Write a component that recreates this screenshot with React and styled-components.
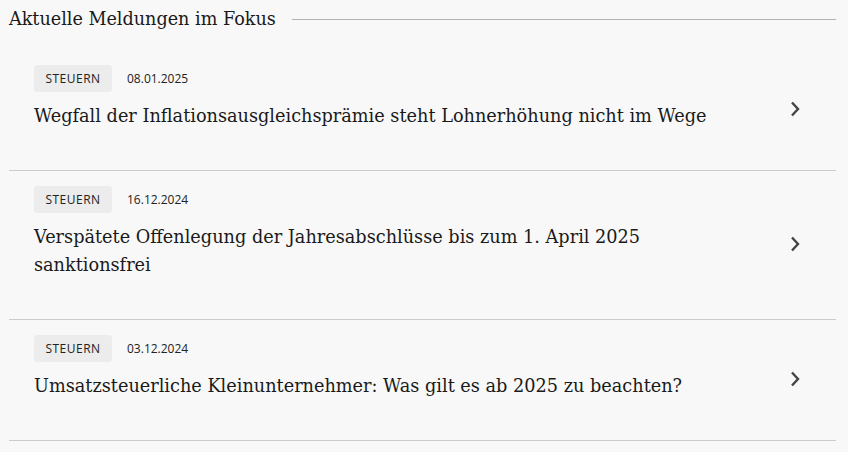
import React from "react";
import styled, { createGlobalStyle } from "styled-components";

const Global = createGlobalStyle`
  html, body { margin: 0; padding: 0; background: #f8f8f8; }
  body { font-family: "DejaVu Serif", serif; color: #1a1a1a; }
`;

const Section = styled.section`
  padding: 6px 12px 0 9px;
`;

const Header = styled.div`
  display: flex;
  align-items: center;
  gap: 16px;
  height: 26px;
`;

const Heading = styled.h2`
  margin: 0;
  font-family: "DejaVu Serif", serif;
  font-weight: 400;
  font-size: 17.6px;
  line-height: 26px;
  color: #1a1a1a;
  white-space: nowrap;
`;

const Rule = styled.div`
  flex: 1;
  height: 1px;
  background: #b3b3b3;
`;

const List = styled.ul`
  list-style: none;
  margin: 18px 0 0;
  padding: 0;
`;

const Item = styled.li`
  display: flex;
  align-items: center;
  padding: 15px 36px 40px 25px;
  border-bottom: 1px solid #cccccc;
`;

const Body = styled.div`
  flex: 1;
`;

const Meta = styled.div`
  display: flex;
  align-items: center;
  gap: 15px;
`;

const Tag = styled.span`
  display: inline-flex;
  align-items: center;
  justify-content: center;
  width: 78px;
  height: 27px;
  background: #ececec;
  border-radius: 3px;
  font-family: "Open Sans", sans-serif;
  font-size: 12px;
  letter-spacing: 0.5px;
  color: #222;
`;

const DateText = styled.span`
  font-family: "Open Sans", sans-serif;
  font-size: 12px;
  color: #222;
`;

const Title = styled.div`
  margin-top: 10px;
  font-family: "DejaVu Serif", serif;
  font-size: 17.7px;
  line-height: 28px;
  color: #1a1a1a;
  max-width: 690px;
`;

const Chevron = styled.svg`
  width: 10px;
  height: 16px;
  flex: none;
  margin-top: 23px;
`;

const items = [
  { tag: "STEUERN", date: "08.01.2025", title: "Wegfall der Inflationsausgleichsprämie steht Lohnerhöhung nicht im Wege" },
  { tag: "STEUERN", date: "16.12.2024", title: "Verspätete Offenlegung der Jahresabschlüsse bis zum 1. April 2025 sanktionsfrei" },
  { tag: "STEUERN", date: "03.12.2024", title: "Umsatzsteuerliche Kleinunternehmer: Was gilt es ab 2025 zu beachten?" },
];

export default function App() {
  return (
    <>
      <Global />
      <Section>
        <Header>
          <Heading>Aktuelle Meldungen im Fokus</Heading>
          <Rule />
        </Header>
        <List>
          {items.map((it) => (
            <Item key={it.date}>
              <Body>
                <Meta>
                  <Tag>{it.tag}</Tag>
                  <DateText>{it.date}</DateText>
                </Meta>
                <Title>{it.title}</Title>
              </Body>
              <Chevron viewBox="0 0 10 16">
                <path d="M2 1.5 L8 8 L2 14.5" fill="none" stroke="#444" strokeWidth="2.4" />
              </Chevron>
            </Item>
          ))}
        </List>
      </Section>
    </>
  );
}
